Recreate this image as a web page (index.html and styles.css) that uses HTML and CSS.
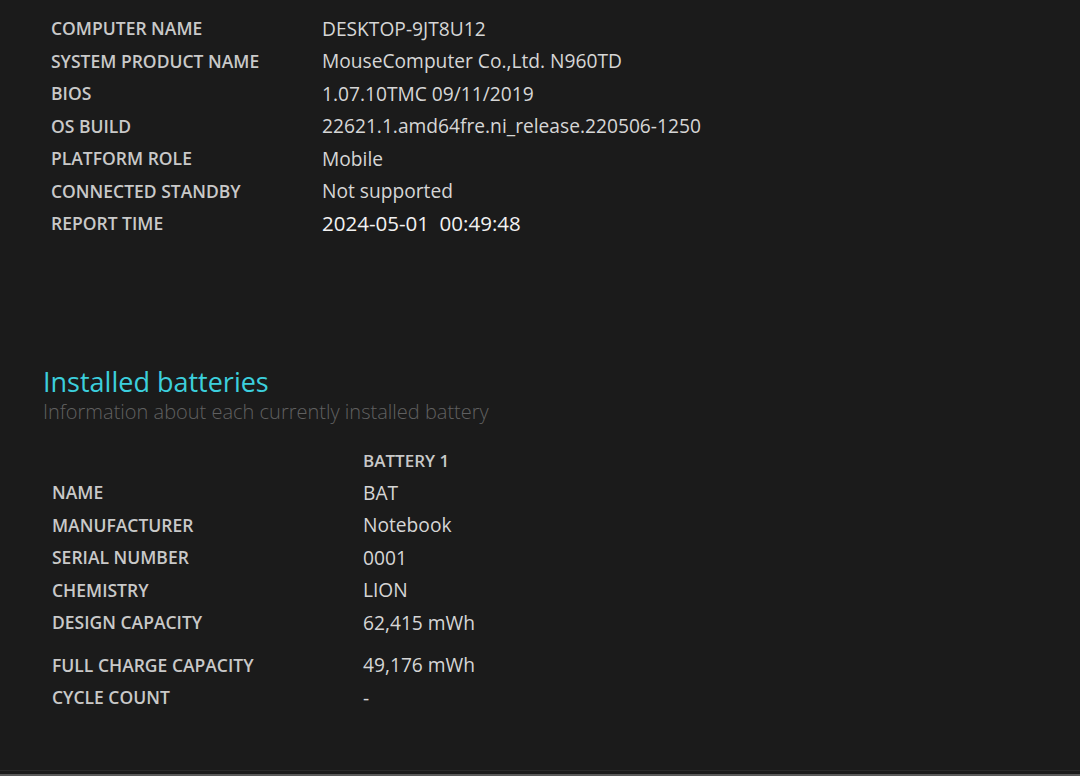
FILE: index.html
```html
<!DOCTYPE html>
<html>
<head>
<meta charset="utf-8">
<link rel="stylesheet" href="styles.css">
</head>
<body>
<div class="page">
  <table class="info">
    <tr><td class="label">COMPUTER NAME</td><td class="value">DESKTOP-9JT8U12</td></tr>
    <tr><td class="label">SYSTEM PRODUCT NAME</td><td class="value">MouseComputer Co.,Ltd. N960TD</td></tr>
    <tr><td class="label">BIOS</td><td class="value">1.07.10TMC 09/11/2019</td></tr>
    <tr><td class="label">OS BUILD</td><td class="value">22621.1.amd64fre.ni_release.220506-1250</td></tr>
    <tr><td class="label">PLATFORM ROLE</td><td class="value">Mobile</td></tr>
    <tr><td class="label">CONNECTED STANDBY</td><td class="value">Not supported</td></tr>
    <tr><td class="label">REPORT TIME</td><td class="value time">2024-05-01&nbsp;&nbsp;00:49:48</td></tr>
  </table>

  <section class="batteries">
    <h2 class="title">Installed batteries</h2>
    <div class="subtitle">Information about each currently installed battery</div>

    <table class="battery">
      <tr class="head-row"><td class="label"></td><td class="head">BATTERY 1</td></tr>
      <tr><td class="label">NAME</td><td class="value">BAT</td></tr>
      <tr><td class="label">MANUFACTURER</td><td class="value">Notebook</td></tr>
      <tr><td class="label">SERIAL NUMBER</td><td class="value">0001</td></tr>
      <tr><td class="label">CHEMISTRY</td><td class="value">LION</td></tr>
      <tr class="gap"><td class="label">DESIGN CAPACITY</td><td class="value">62,415 mWh</td></tr>
      <tr><td class="label">FULL CHARGE CAPACITY</td><td class="value">49,176 mWh</td></tr>
      <tr><td class="label">CYCLE COUNT</td><td class="value">-</td></tr>
    </table>
  </section>
</div>
<div class="bottom-edge"></div>
</body>
</html>
```

FILE: styles.css
```css
html, body {
  margin: 0;
  padding: 0;
  background: #1b1b1b;
  height: 100%;
  overflow: hidden;
}
body {
  font-family: "Open Sans", "Noto Sans", sans-serif;
  color: #d8d8d8;
  display: flex;
  flex-direction: column;
}
.page {
  flex: 1;
  padding: 12px 0 0 43px;
}
table {
  border-collapse: collapse;
}
td {
  padding: 0;
  height: 32.5px;
  vertical-align: middle;
  white-space: nowrap;
}
.label {
  font-size: 17.5px;
  font-weight: 600;
  color: #c9c9c9;
  padding-left: 8px;
}
.info .label { width: 271px; }
.battery .label { width: 311px; padding-left: 9px; }
.value {
  font-size: 19.2px;
  color: #d6d6d6;
}
.time {
  color: #f2f2f2;
  font-size: 20.5px;
  font-weight: 400;
}
.batteries {
  margin-top: 126.5px;
}
.title {
  margin: 0;
  font-size: 27px;
  font-weight: 500;
  color: #3ccfdd;
  line-height: 32px;
}
.subtitle {
  font-size: 20px;
  font-weight: 300;
  color: #606060;
  line-height: 30px;
  margin-top: -1px;
}
.battery {
  margin-top: 17.75px;
}
.head-row td { height: 31px; }
.head {
  font-size: 17px;
  font-weight: 600;
  color: #c9c9c9;
}
.gap td { padding-bottom: 10px; }
.bottom-edge {
  height: 6px;
  border-top: 1px solid #2b2b2b;
  border-bottom: 2px solid #5a5a5a;
  background: #1b1b1b;
  box-sizing: border-box;
}
```
